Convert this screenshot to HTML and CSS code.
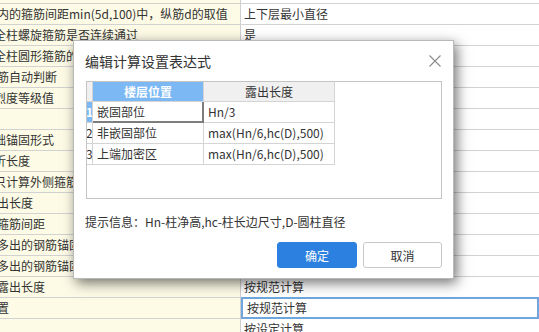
FILE: index.html
```html
<!DOCTYPE html>
<html lang="zh">
<head>
<meta charset="utf-8">
<title>编辑计算设置表达式</title>
<link rel="stylesheet" href="styles.css">
</head>
<body>
<div class="sheet">
  <div class="row"><div class="lc"></div><div class="rc"></div></div>
  <div class="row"><div class="lc"><span class="t">内的箍筋间距min(5d,100)中，纵筋d的取值</span></div><div class="rc">上下层最小直径</div></div>
  <div class="row"><div class="lc"><span class="t cut">全柱螺旋箍筋是否连续通过</span></div><div class="rc">是</div></div>
  <div class="row"><div class="lc"><span class="t cut">全柱圆形箍筋的搭接长度</span></div><div class="rc"></div></div>
  <div class="row"><div class="lc"><span class="t">筋自动判断</span></div><div class="rc"></div></div>
  <div class="row"><div class="lc"><span class="t cut">烈度等级值</span></div><div class="rc"></div></div>
  <div class="row"><div class="lc"></div><div class="rc"></div></div>
  <div class="row"><div class="lc"><span class="t cut">础锚固形式</span></div><div class="rc"></div></div>
  <div class="row"><div class="lc"><span class="t cut">折长度</span></div><div class="rc"></div></div>
  <div class="row"><div class="lc"><span class="t cut">只计算外侧箍筋</span></div><div class="rc"></div></div>
  <div class="row"><div class="lc"><span class="t">出长度</span></div><div class="rc"></div></div>
  <div class="row"><div class="lc"><span class="t">箍筋间距</span></div><div class="rc"></div></div>
  <div class="row"><div class="lc"><span class="t">多出的钢筋锚固</span></div><div class="rc"></div></div>
  <div class="row"><div class="lc"><span class="t">多出的钢筋锚固</span></div><div class="rc"></div></div>
  <div class="row"><div class="lc"><span class="t">露出长度</span></div><div class="rc">按规范计算</div></div>
  <div class="row"><div class="lc"><span class="t">置</span></div><div class="rc sel">按规范计算</div></div>
  <div class="row"><div class="lc"></div><div class="rc">按设定计算</div></div>
</div>

<div class="dialog">
  <div class="dlg-head">
    <span class="dlg-title">编辑计算设置表达式</span>
    <svg class="close" width="12" height="12" viewBox="0 0 12 12"><path d="M0.5 0.5 L11.5 11.5 M11.5 0.5 L0.5 11.5" stroke="#8a8a8a" stroke-width="1.1" fill="none"/></svg>
  </div>
  <div class="grid">
    <div class="g rn hd"></div>
    <div class="g c1 hd hd1">楼层位置</div>
    <div class="g c2 hd hd2">露出长度</div>
    <div class="g rest"></div>

    <div class="g rn rn-sel">1</div>
    <div class="g c1 cur">嵌固部位</div>
    <div class="g c2">Hn/3</div>
    <div class="g rest"></div>

    <div class="g rn">2</div>
    <div class="g c1">非嵌固部位</div>
    <div class="g c2">max(Hn/6,hc(D),500)</div>
    <div class="g rest"></div>

    <div class="g rn">3</div>
    <div class="g c1">上端加密区</div>
    <div class="g c2">max(Hn/6,hc(D),500)</div>
    <div class="g rest"></div>
  </div>
  <div class="hint">提示信息：Hn-柱净高,hc-柱长边尺寸,D-圆柱直径</div>
  <div class="btns">
    <button class="btn ok">确定</button>
    <button class="btn cancel">取消</button>
  </div>
</div>
</body>
</html>
```

FILE: styles.css
```css
html, body {
  margin: 0;
  padding: 0;
}
body {
  width: 539px;
  height: 332px;
  overflow: hidden;
  position: relative;
  background: #ffffff;
  font-family: "Noto Sans CJK SC", "Noto Sans", sans-serif;
  font-size: 12px;
  color: #333333;
}

/* background sheet */
.sheet {
  margin-top: -17px;
}
.row {
  display: flex;
  height: 21px;
  box-sizing: border-box;
  border-bottom: 1px solid #d2d2d2;
}
.lc {
  width: 241px;
  box-sizing: border-box;
  background: #fdfbe6;
  border-right: 1px solid #cfcfcf;
  overflow: hidden;
  white-space: nowrap;
  line-height: 20px;
}
.lc .t {
  display: inline-block;
  margin-left: -3px;
}
.lc .t.cut {
  margin-left: -6px;
}
.rc {
  flex: 1;
  line-height: 20px;
  padding-left: 3px;
  white-space: nowrap;
}
.rc.sel {
  border: 2px solid #6ea6dd;
  margin-top: -1px;
  margin-bottom: -1px;
  line-height: 18px;
  padding-left: 4px;
  height: 22px;
  box-sizing: border-box;
}

/* dialog */
.dialog {
  position: absolute;
  left: 73px;
  top: 40px;
  width: 381px;
  height: 239px;
  box-sizing: border-box;
  background: #ffffff;
  border: 1px solid #b9b9b9;
  box-shadow: 3px 4px 12px rgba(0, 0, 0, 0.55);
  display: flex;
  flex-direction: column;
}
.dlg-head {
  height: 40px;
  display: flex;
  align-items: center;
  justify-content: space-between;
  padding: 0 12px 0 11px;
}
.dlg-title {
  font-size: 14px;
  color: #333333;
}
.close {
  display: block;
  margin-top: 0px;
}

.grid {
  margin-left: 12px;
  width: 356px;
  height: 118px;
  box-sizing: border-box;
  border: 1px solid #c4c4c4;
  display: grid;
  grid-template-columns: 6px 111px 131px 1fr;
  grid-template-rows: 20px 21px 21px 21px 1fr;
}
.g {
  box-sizing: border-box;
  border-bottom: 1px solid #d4d4d4;
  border-right: 1px solid #d4d4d4;
  line-height: 20px;
  white-space: nowrap;
  overflow: hidden;
}
.g.rest {
  border-right: none;
  border-bottom: none;
}
.rn {
  background: #ffffff;
  font-size: 12px;
  padding-left: 0;
  text-indent: -1px;
  color: #333333;
}
.rn.hd {
  background: #f0f0f0;
}
.rn-sel {
  background: #7cb9f4;
  color: #ffffff;
  font-weight: bold;
}
.hd {
  line-height: 19px;
  text-align: center;
}
.hd1 {
  background: #7cb9f4;
  color: #ffffff;
  font-weight: bold;
}
.hd2 {
  background: #f0f0f0;
  color: #333333;
}
.c1, .c2 {
  padding-left: 4px;
}
.hd.c1, .hd.c2 {
  padding-left: 0;
}
.cur {
  border-right: 2px solid #7d7d7d;
  border-bottom: 2px solid #7d7d7d;
  line-height: 19px;
}

.hint {
  margin: 13px 0 0 11px;
  line-height: 20px;
  color: #333333;
}
.btns {
  display: flex;
  justify-content: flex-end;
  gap: 6px;
  margin: 10px 11px 0 0;
}
.btn {
  font-family: "Noto Sans CJK SC", "Noto Sans", sans-serif;
  font-size: 12px;
  height: 26px;
  box-sizing: border-box;
  border-radius: 3px;
  padding: 0;
  margin: 0;
}
.ok {
  width: 80px;
  background: #2c81e0;
  border: 1px solid #2c81e0;
  color: #ffffff;
}
.cancel {
  width: 79px;
  background: #ffffff;
  border: 1px solid #c8c8c8;
  color: #333333;
}
```
